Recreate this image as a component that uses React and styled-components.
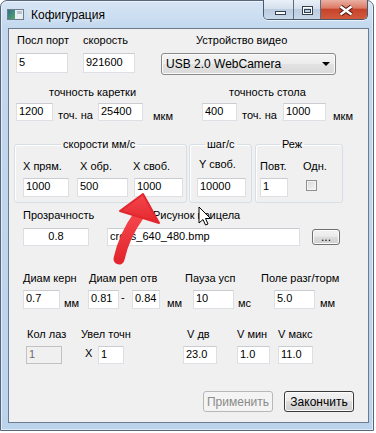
import styled, { createGlobalStyle } from 'styled-components'

const GlobalStyle = createGlobalStyle`
    html, body {
        margin: 0;
        padding: 0;
        background: #ffffff;
    }
    body {
        font-family: "Liberation Sans", Arial, sans-serif;
        font-size: 11px;
        color: #000;
    }
`

const Window = styled.div`
    width: 374px;
    height: 431px;
    box-sizing: border-box;
    display: flex;
    flex-direction: column;
    border: 1px solid #56677b;
    border-radius: 7px 7px 0 0;
    background: linear-gradient(180deg, #d6e5f5 0, #c3d8ee 27px, #bcd3ec 100%);
    box-shadow: inset 0 0 0 1px rgba(255, 255, 255, .55);
`

const TitleBar = styled.div`
    height: 27px;
    display: flex;
    align-items: center;
    flex-shrink: 0;
`

const AppIcon = styled.svg`
    margin-left: 6px;
    flex-shrink: 0;
`

const Title = styled.span`
    margin-left: 7px;
    font-family: "Liberation Sans", Arial, sans-serif;
    font-size: 12px;
    line-height: 14px;
    text-shadow: 0 0 6px rgba(255, 255, 255, .9);
`

const CaptionGroup = styled.div`
    align-self: flex-start;
    margin: -1px 5px 0 auto;
    height: 19px;
    display: flex;
    border: 1px solid #4a5a6c;
    border-top: none;
    border-radius: 0 0 5px 5px;
    overflow: hidden;
    box-shadow: 0 1px 0 rgba(255, 255, 255, .6);
`

const CapBtn = styled.div`
    width: ${p => p.$w}px;
    height: 19px;
    display: flex;
    box-sizing: border-box;
    border-left: ${p => p.$first ? 'none' : '1px solid #5d6d80'};
    background: ${p => p.$close
        ? 'linear-gradient(180deg, #eab0a2 0%, #dc7c66 42%, #c7432b 50%, #d15a3c 100%)'
        : 'linear-gradient(180deg, #e9f0f7 0%, #d5e0ed 45%, #bccde1 50%, #c9d8e9 100%)'};
`

const Client = styled.div`
    position: relative;
    flex: 1;
    margin: 0 4px 7px 7px;
    border: 1px solid #6d7c8c;
    background: #f0f0f0;
`

const Row = styled.div`
    display: flex;
    align-items: flex-start;
    margin-top: ${p => p.$mt || 0}px;
    height: ${p => p.$h ? `${p.$h}px` : 'auto'};
`

const Label = styled.span`
    margin-left: ${p => p.$ml || 0}px;
    width: ${p => p.$w}px;
    flex-shrink: 0;
    line-height: 14px;
    white-space: nowrap;
`

const Unit = styled.span`
    margin-left: ${p => p.$ml || 0}px;
    width: ${p => p.$w}px;
    padding-top: ${p => p.$pt || 0}px;
    flex-shrink: 0;
    line-height: 14px;
    white-space: nowrap;
`

const Edit = styled.input`
    margin: 0 0 0 ${p => p.$ml || 0}px;
    width: ${p => p.$w}px;
    height: ${p => p.$h || 18}px;
    box-sizing: border-box;
    flex-shrink: 0;
    padding: 0 2px 3px;
    font-family: "Liberation Sans", Arial, sans-serif;
    font-size: 11px;
    color: #000;
    text-align: ${p => p.$center ? 'center' : 'left'};
    background: #fff;
    border: 1px solid #dcdfe3;
    border-top-color: #c9ccd1;
    outline: none;
    &:disabled {
        background: #f0f0f0;
        border-color: #c2c2c2;
        color: #6d6d6d;
    }
`

const Combo = styled.div`
    margin-left: ${p => p.$ml || 0}px;
    width: ${p => p.$w}px;
    height: 22px;
    box-sizing: border-box;
    display: flex;
    align-items: center;
    justify-content: space-between;
    padding: 0 4px;
    border: 1px solid #8a8a8a;
    border-radius: 3px;
    background: linear-gradient(180deg, #f4f4f4 0%, #ececec 50%, #e2e2e2 51%, #dadada 100%);
    box-shadow: inset 0 0 0 1px #fafafa;
    font-size: 12px;
`

const DropArrow = styled.span`
    width: 0;
    height: 0;
    border-left: 4px solid transparent;
    border-right: 4px solid transparent;
    border-top: 4px solid #000;
    margin-right: 1px;
`

const GroupBox = styled.fieldset`
    margin: 0 0 0 ${p => p.$ml || 0}px;
    width: ${p => p.$w}px;
    height: 66px;
    box-sizing: border-box;
    padding: 0;
    min-width: 0;
    flex-shrink: 0;
    border: 1px solid #d5dfe5;
    border-radius: 3px;
    box-shadow: 1px 1px 0 #fff inset;
`

const Legend = styled.legend`
    margin-left: ${p => p.$ml}px;
    padding: 0 2px;
    line-height: 14px;
    font-size: 11px;
`

const CheckBox = styled.span`
    margin: 2px 0 0 ${p => p.$ml || 0}px;
    width: 11px;
    height: 11px;
    box-sizing: border-box;
    flex-shrink: 0;
    border: 1px solid #8e8f8f;
    background: linear-gradient(135deg, #d8d8d8 0%, #eeeeee 70%, #f6f6f6 100%);
    box-shadow: inset 0 0 0 1px #f4f4f4;
`

const Button = styled.button`
    margin: ${p => p.$mt || 0}px 0 0 ${p => p.$ml || 0}px;
    width: ${p => p.$w}px;
    height: ${p => p.$h || 21}px;
    box-sizing: border-box;
    flex-shrink: 0;
    padding: 0;
    font-family: "Liberation Sans", Arial, sans-serif;
    font-size: 12px;
    line-height: 12px;
    color: #000;
    border: 1px solid ${p => p.$default ? '#3a3a3a' : '#707070'};
    border-radius: 3px;
    background: linear-gradient(180deg, #f2f2f2 0%, #ebebeb 45%, #dddddd 50%, #cfcfcf 100%);
    box-shadow: inset 0 0 0 1px #fcfcfc;
    &:disabled {
        color: #8b8b8b;
        border-color: #b5b9bc;
        background: #f4f4f4;
        box-shadow: none;
    }
`

const Overlay = styled.svg`
    position: absolute;
    left: 0;
    top: 0;
    pointer-events: none;
`

const App = () => {
    return (
        <>
            <GlobalStyle />
            <Window>
                <TitleBar>
                    <AppIcon width="17" height="11" viewBox="0 0 17 11">
                        <defs>
                            <linearGradient id="ico" x1="0" y1="0" x2="1" y2="1">
                                <stop offset="0" stopColor="#2e6f8f" />
                                <stop offset="1" stopColor="#58a86c" />
                            </linearGradient>
                        </defs>
                        <rect x="0.5" y="0.5" width="16" height="10" fill="#e9eef3" stroke="#6f7d8b" />
                        <rect x="1" y="1" width="7" height="9" fill="url(#ico)" />
                        <rect x="10" y="2" width="5" height="3" fill="#b9c4cf" />
                    </AppIcon>
                    <Title>Кофигурация</Title>
                    <CaptionGroup>
                        <CapBtn $w={29} $first>
                            <svg width="29" height="19">
                                <rect x="11.5" y="11.5" width="10" height="3" fill="#fff" stroke="#33414f" />
                            </svg>
                        </CapBtn>
                        <CapBtn $w={27}>
                            <svg width="27" height="19">
                                <rect x="8.5" y="6.5" width="10" height="8" fill="none" stroke="#33414f" />
                                <rect x="9.5" y="7.5" width="8" height="6" fill="none" stroke="#fff" />
                                <rect x="10.5" y="9.5" width="6" height="3" fill="none" stroke="#33414f" />
                            </svg>
                        </CapBtn>
                        <CapBtn $w={47} $close>
                            <svg width="47" height="19">
                                <path d="M19.5 6.5 L30.5 14.5 M30.5 6.5 L19.5 14.5" stroke="#4a1a12" strokeWidth="4.5" />
                                <path d="M19.5 6.5 L30.5 14.5 M30.5 6.5 L19.5 14.5" stroke="#fff" strokeWidth="2.4" />
                            </svg>
                        </CapBtn>
                    </CaptionGroup>
                </TitleBar>

                <Client>
                    <Row $mt={4} $h={14}>
                        <Label $ml={8} $w={52}>Посл порт</Label>
                        <Label $ml={14} $w={48}>скорость</Label>
                        <Label $ml={65} $w={100}>Устройство видео</Label>
                    </Row>
                    <Row $mt={6}>
                        <Edit $ml={7} $w={52} $h={20} value="5" readOnly />
                        <Edit $ml={15} $w={52} $h={20} value="921600" readOnly />
                        <Combo $ml={26} $w={175}>
                            <span>USB 2.0 WebCamera</span>
                            <DropArrow />
                        </Combo>
                    </Row>

                    <Row $mt={10} $h={14}>
                        <Label $ml={40} $w={92}>точность каретки</Label>
                        <Label $ml={88} $w={90}>точность стола</Label>
                    </Row>
                    <Row $mt={4}>
                        <Edit $ml={7} $w={37} value="1200" readOnly />
                        <Unit $ml={5} $w={36} $pt={5}>точ. на</Unit>
                        <Edit $ml={4} $w={45} value="25400" readOnly />
                        <Unit $ml={10} $w={24} $pt={6}>мкм</Unit>
                        <Edit $ml={25} $w={35} value="400" readOnly />
                        <Unit $ml={5} $w={36} $pt={5}>точ. на</Unit>
                        <Edit $ml={5} $w={43} value="1000" readOnly />
                        <Unit $ml={7} $w={24} $pt={6}>мкм</Unit>
                    </Row>

                    <Row $mt={14}>
                        <GroupBox $ml={5} $w={173}>
                            <Legend $ml={46}>скорости мм/с</Legend>
                            <Row $mt={8} $h={14}>
                                <Label $ml={8} $w={40}>X прям.</Label>
                                <Label $ml={17} $w={32}>X обр.</Label>
                                <Label $ml={21} $w={40}>X своб.</Label>
                            </Row>
                            <Row $mt={5}>
                                <Edit $ml={8} $w={46} $h={19} value="1000" readOnly />
                                <Edit $ml={8} $w={51} $h={19} value="500" readOnly />
                                <Edit $ml={6} $w={49} $h={19} value="1000" readOnly />
                            </Row>
                        </GroupBox>
                        <GroupBox $ml={2} $w={63}>
                            <Legend $ml={15}>шаг/с</Legend>
                            <Row $mt={6} $h={14}>
                                <Label $ml={9} $w={40}>Y своб.</Label>
                            </Row>
                            <Row $mt={7}>
                                <Edit $ml={7} $w={49} $h={19} value="10000" readOnly />
                            </Row>
                        </GroupBox>
                        <GroupBox $ml={3} $w={88}>
                            <Legend $ml={24}>Реж</Legend>
                            <Row $mt={8} $h={14}>
                                <Label $ml={4} $w={28}>Повт.</Label>
                                <Label $ml={15} $w={26}>Одн.</Label>
                            </Row>
                            <Row $mt={5}>
                                <Edit $ml={4} $w={28} $h={19} value="1" readOnly />
                                <CheckBox $ml={18} />
                            </Row>
                        </GroupBox>
                    </Row>

                    <Row $mt={5} $h={14}>
                        <Label $ml={14} $w={72}>Прозрачность</Label>
                        <Label $ml={58} $w={90}>Рисунок прицела</Label>
                    </Row>
                    <Row $mt={6}>
                        <Edit $ml={14} $w={66} $center value="0.8" readOnly />
                        <Edit $ml={18} $w={193} value="cross_640_480.bmp" readOnly />
                        <Button $ml={12} $w={28} $h={16} $mt={1}>...</Button>
                    </Row>

                    <Row $mt={25} $h={14}>
                        <Label $ml={14} $w={58}>Диам керн</Label>
                        <Label $ml={8} $w={72}>Диам реп отв</Label>
                        <Label $ml={24} $w={54}>Пауза усп</Label>
                        <Label $ml={22} $w={85}>Поле разг/торм</Label>
                    </Row>
                    <Row $mt={5}>
                        <Edit $ml={14} $w={37} $h={19} value="0.7" readOnly />
                        <Unit $ml={4} $w={17} $pt={6}>мм</Unit>
                        <Edit $ml={7} $w={31} $h={19} value="0.81" readOnly />
                        <Unit $ml={2} $w={10}>-</Unit>
                        <Edit $ml={1} $w={28} $h={19} value="0.84" readOnly />
                        <Unit $ml={7} $w={17} $pt={6}>мм</Unit>
                        <Edit $ml={9} $w={41} $h={19} value="10" readOnly />
                        <Unit $ml={4} $w={15} $pt={6}>мс</Unit>
                        <Edit $ml={21} $w={41} $h={19} value="5.0" readOnly />
                        <Unit $ml={5} $w={17} $pt={6}>мм</Unit>
                    </Row>

                    <Row $mt={17} $h={14}>
                        <Label $ml={18} $w={40}>Кол лаз</Label>
                        <Label $ml={14} $w={52}>Увел точн</Label>
                        <Label $ml={54} $w={24}>V дв</Label>
                        <Label $ml={26} $w={31}>V мин</Label>
                        <Label $ml={10} $w={38}>V макс</Label>
                    </Row>
                    <Row $mt={5}>
                        <Edit $ml={17} $w={36} value="1" disabled readOnly />
                        <Unit $ml={23} $w={9}>X</Unit>
                        <Edit $ml={4} $w={26} value="1" readOnly />
                        <Edit $ml={59} $w={34} value="23.0" readOnly />
                        <Edit $ml={20} $w={33} value="1.0" readOnly />
                        <Edit $ml={8} $w={35} value="11.0" readOnly />
                    </Row>

                    <Row $mt={27}>
                        <Button $ml={194} $w={70} disabled>Применить</Button>
                        <Button $ml={11} $w={70} $default>Закончить</Button>
                    </Row>

                    {/* annotation arrow and mouse pointer drawn over the form */}
                    <Overlay width="359" height="393" viewBox="0 0 359 393">
                        <defs>
                            <linearGradient id="red" x1="0" y1="0" x2="0" y2="1">
                                <stop offset="0" stopColor="#f4474c" />
                                <stop offset="1" stopColor="#e3262e" />
                            </linearGradient>
                        </defs>
                        <path d="M130 186 Q115 207 110 230" fill="none" stroke="url(#red)" strokeWidth="11" strokeLinecap="round" />
                        <polygon points="134,165 111,182 150,194" fill="url(#red)" stroke="#e3262e" strokeWidth="2" strokeLinejoin="round" />
                        <path d="M190 178 L190 194 L194 190.5 L196.5 196 L199 195 L196.5 189.5 L201.5 189.5 Z"
                            fill="#fff" stroke="#000" strokeWidth="1" strokeLinejoin="miter" />
                    </Overlay>
                </Client>
            </Window>
        </>
    )
}

export default App
